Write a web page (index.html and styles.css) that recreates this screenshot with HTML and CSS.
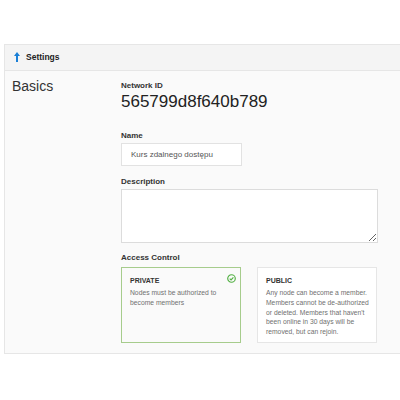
FILE: index.html
```html
<!DOCTYPE html>
<html lang="en">
<head>
  <meta charset="UTF-8" />
  <title>Network Settings</title>
  <link rel="stylesheet" href="styles.css">
</head>
<body>

<div class="panel">
  <div class="panel-header">
    <svg class="up-arrow" viewBox="0 0 6 10" width="6" height="10">
      <path d="M3 0 L6 4 H4 V10 H2 V4 H0 Z" fill="#1a7fd6"/>
    </svg>
    <span>Settings</span>
  </div>

  <div class="panel-body">
    <h2 class="section-title">Basics</h2>

    <div class="fields">
      <div class="field">
        <div class="field-label">Network ID</div>
        <div class="net-id">565799d8f640b789</div>
      </div>

      <div class="field field-name">
        <label class="field-label" for="netName">Name</label>
        <input type="text" id="netName" value="Kurs zdalnego dostępu" />
      </div>

      <div class="field field-desc">
        <label class="field-label" for="netDesc">Description</label>
        <textarea id="netDesc"></textarea>
      </div>

      <div class="field field-access">
        <div class="field-label">Access Control</div>
        <div class="access-options">
          <div class="access-card selected">
            <svg class="check" viewBox="0 0 10 10" width="9" height="9">
              <circle cx="5" cy="5" r="4.2" fill="none" stroke="#52b043" stroke-width="1.3"/>
              <path d="M3 5.1 L4.5 6.5 L7.1 3.7" fill="none" stroke="#52b043" stroke-width="1.3"/>
            </svg>
            <div class="access-title">PRIVATE</div>
            <p>Nodes must be authorized to become members</p>
          </div>
          <div class="access-card">
            <div class="access-title">PUBLIC</div>
            <p>Any node can become a member. Members cannot be de-authorized or deleted. Members that haven't been online in 30 days will be removed, but can rejoin.</p>
          </div>
        </div>
      </div>
    </div>
  </div>
</div>

</body>
</html>
```

FILE: styles.css
```css
* { box-sizing: border-box; }

body {
  margin: 0;
  padding: 44px 0 0 4px;
  font-family: 'Liberation Sans', Arial, sans-serif;
  color: #333;
  background: #fff;
  overflow: hidden;
}

.panel {
  width: 410px;
  height: 310px;
  background: #fafafa;
  border: 1px solid #e6e6e6;
}

.panel-header {
  display: flex;
  align-items: center;
  gap: 6px;
  height: 26px;
  padding: 0 0 1px 9px;
  background: #f4f4f4;
  border-bottom: 1px solid #e6e6e6;
  font-size: 8.5px;
  font-weight: bold;
  color: #222;
}

.panel-body {
  display: grid;
  grid-template-columns: 116px 257px;
  padding-top: 7px;
}

.section-title {
  margin: 0;
  padding-left: 7px;
  font-size: 14px;
  font-weight: normal;
  line-height: 16px;
  color: #333;
}

.fields {
  padding-top: 3px;
}

.field-label {
  display: block;
  font-size: 8px;
  font-weight: bold;
  line-height: 10px;
  margin-bottom: 2px;
  color: #333;
}

.net-id {
  margin-top: -1px;
  font-size: 17px;
  line-height: 20px;
  color: #222;
}

.field-name { margin-top: 19px; }
.field-desc { margin-top: 11px; }
.field-access { margin-top: 10px; }
.field-access .field-label { margin-bottom: 4px; }

input[type="text"] {
  display: block;
  width: 121px;
  height: 23px;
  padding: 0 9px;
  border: 1px solid #e2e2e2;
  background: #fff;
  font-family: inherit;
  font-size: 8px;
  color: #555;
}

textarea {
  display: block;
  width: 257px;
  height: 54px;
  border: 1px solid #dcdcdc;
  background: #fff;
  resize: both;
}

.access-options {
  display: grid;
  grid-template-columns: 120px 120px;
  gap: 16px;
}

.access-card {
  position: relative;
  height: 76px;
  padding: 8px 5px 0 8px;
  border: 1px solid #e6e6e6;
  background: #fff;
}

.access-card.selected {
  background: #fafafa;
  border-color: #a6cc8c;
}

.check {
  position: absolute;
  top: 6px;
  right: 4px;
}

.access-title {
  font-size: 7px;
  font-weight: bold;
  line-height: 9px;
  margin-bottom: 3px;
  color: #333;
}

.access-card p {
  margin: 0;
  font-size: 6.75px;
  line-height: 9.8px;
  color: #707070;
}
```
